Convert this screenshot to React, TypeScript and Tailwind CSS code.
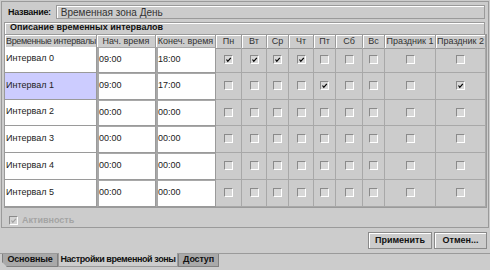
import React from 'react';

const cols = 'grid grid-cols-[92px_59px_60px_26px_25px_22px_25px_22px_27px_22px_51px_50px]';
const days = ['Пн', 'Вт', 'Ср', 'Чт', 'Пт', 'Сб', 'Вс', 'Праздник 1', 'Праздник 2'];

const rows = [
  { name: 'Интервал 0', from: '09:00', to: '18:00', checks: [1, 1, 1, 1, 0, 0, 0, 0, 0], h: 'h-[26px]' },
  { name: 'Интервал 1', from: '09:00', to: '17:00', checks: [0, 0, 0, 0, 1, 0, 0, 0, 1], h: 'h-[27px]', sel: true },
  { name: 'Интервал 2', from: '00:00', to: '00:00', checks: [0, 0, 0, 0, 0, 0, 0, 0, 0], h: 'h-[26px]' },
  { name: 'Интервал 3', from: '00:00', to: '00:00', checks: [0, 0, 0, 0, 0, 0, 0, 0, 0], h: 'h-[27px]' },
  { name: 'Интервал 4', from: '00:00', to: '00:00', checks: [0, 0, 0, 0, 0, 0, 0, 0, 0], h: 'h-[27px]' },
  { name: 'Интервал 5', from: '00:00', to: '00:00', checks: [0, 0, 0, 0, 0, 0, 0, 0, 0], h: 'h-[27px]' },
];

function Box({ on, disabled }: { on?: boolean; disabled?: boolean }) {
  return (
    <div
      className={`w-[9px] h-[9px] border border-t-[#8a8a8a] border-l-[#8a8a8a] border-b-white border-r-white flex items-center justify-center ${
        disabled ? 'bg-[#d4d4d4]' : 'bg-[#d8d8d8]'
      }`}
    >
      {on && (
        <svg width="7" height="7" viewBox="0 0 7 7">
          <path d="M1.5 3.5 L2.8 5.3 L5.8 1.8" fill="none" stroke={disabled ? '#a0a0a0' : '#000'} strokeWidth="1.2" />
        </svg>
      )}
    </div>
  );
}

export default function App() {
  return (
    <div className="w-[490px] h-[270px] bg-[#cccccc] text-[9px] text-[#222] font-['Liberation_Sans',Arial,sans-serif] flex flex-col overflow-hidden select-none">
      <div className="mx-[1px] mt-[1px] h-[227px] border border-[#9a9a9a] flex flex-col px-[2px]">
        <div className="flex items-center h-[21px] pt-[3px]">
          <span className="font-bold text-[#111] pl-[4px] tracking-[-0.3px] whitespace-nowrap">Название:</span>
          <div className="flex-1 ml-[5px] h-[14px] mr-[1px] border border-[#9a9a9a] shadow-[inset_1px_1px_0_#ffffff] flex items-center px-[4px] text-[#333] text-[10px]">
            Временная зона День
          </div>
        </div>

        <div className="mt-[2px] h-[12px] border border-[#9a9a9a] border-b-0 shadow-[inset_1px_1px_0_#ffffff] flex items-center pl-[5px] font-bold text-[#111] mr-[1px]">
          Описание временных интервалов
        </div>

        <div className="border border-[#9a9a9a] mr-[1px] w-[483px]">
          <div className={`${cols} h-[12px] text-[#333]`}>
            <div className="border-r border-b border-[#9a9a9a] shadow-[inset_1px_1px_0_#ffffff] flex items-center pl-[1px] whitespace-nowrap overflow-hidden tracking-[-0.35px]">
              Временные интервалы
            </div>
            <div className="border-r border-b border-[#9a9a9a] shadow-[inset_1px_1px_0_#ffffff] flex items-center justify-center whitespace-nowrap">Нач. время</div>
            <div className="border-r border-b border-[#9a9a9a] shadow-[inset_1px_1px_0_#ffffff] flex items-center justify-center whitespace-nowrap">Конеч. время</div>
            {days.map((d) => (
              <div key={d} className="border-r border-b border-[#9a9a9a] shadow-[inset_1px_1px_0_#ffffff] flex items-center justify-center whitespace-nowrap overflow-hidden">
                {d}
              </div>
            ))}
          </div>

          {rows.map((r) => (
            <div key={r.name} className={`${cols} ${r.h}`}>
              <div className={`border-r border-b border-[#9a9a9a] flex items-center pl-[1px] ${r.sel ? 'bg-[#ccccff]' : 'bg-white'}`}>
                {r.name}
              </div>
              <div className="bg-white border-l-2 border-t border-[#a8a8a8] border-r border-r-[#9a9a9a] border-b border-b-[#9a9a9a] flex items-center">
                {r.from}
              </div>
              <div className="bg-white border-l-2 border-t border-[#a8a8a8] border-r border-r-[#9a9a9a] border-b border-b-[#9a9a9a] flex items-center">
                {r.to}
              </div>
              {r.checks.map((c, i) => (
                <div key={i} className="border-r border-b border-[#a8a8a8] flex items-center justify-center">
                  <Box on={!!c} />
                </div>
              ))}
            </div>
          ))}
        </div>

        <div className="flex items-center gap-[4px] pl-[5px] mt-[6px] text-[#a4a4a4] font-bold">
          <Box on disabled />
          <span>Активность</span>
        </div>
      </div>

      <div className="flex justify-end gap-[2px] pr-[3px] mt-[4px]">
        <button className="w-[64px] h-[17px] border border-[#8a8a8a] shadow-[inset_1px_1px_0_#ffffff] font-bold text-[#111] flex items-center justify-center">
          Применить
        </button>
        <button className="w-[53px] h-[17px] border border-[#8a8a8a] shadow-[inset_1px_1px_0_#ffffff] font-bold text-[#111] flex items-center justify-center">
          Отмен...
        </button>
      </div>

      <div className="mt-[4px] border-t border-[#9a9a9a] flex items-start pl-[2px] h-[15px]">
        <div className="w-[56px] h-[13px] bg-[#a9a9a9] border border-[#808080] border-t-0 [clip-path:polygon(0_0,100%_0,100%_100%,5px_100%,0_calc(100%-5px))] flex items-center justify-center font-bold text-[#111] whitespace-nowrap tracking-[-0.2px]">
          Основные
        </div>
        <div className="w-[120px] h-[14px] bg-[#cccccc] border border-[#9a9a9a] border-t-0 -mt-[1px] flex items-center justify-center font-bold text-[#111] whitespace-nowrap tracking-[-0.4px]">
          Настройки временной зоны
        </div>
        <div className="w-[41px] h-[13px] bg-[#a9a9a9] border border-[#808080] border-t-0 flex items-center justify-center font-bold text-[#111] whitespace-nowrap tracking-[-0.2px]">
          Доступ
        </div>
      </div>
    </div>
  );
}
